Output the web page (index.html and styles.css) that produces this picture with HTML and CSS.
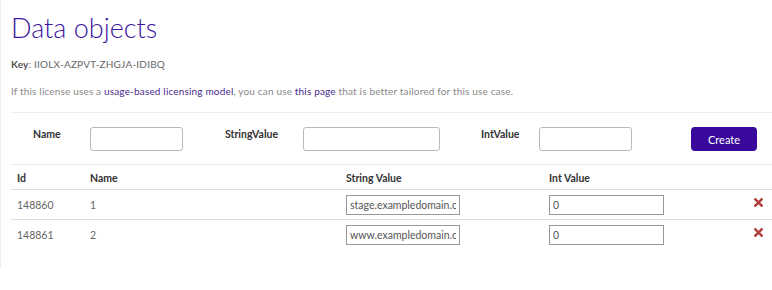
FILE: index.html
```html
<!DOCTYPE html>
<html lang="en">
<head>
    <meta charset="UTF-8">
    <title>Data objects</title>
    <link rel="stylesheet" href="styles.css">
</head>
<body>
    <div class="panel">
        <h1 class="title">Data objects</h1>
        <p class="key"><strong>Key</strong>: IIOLX-AZPVT-ZHGJA-IDIBQ</p>
        <p class="note">If this license uses a <a href="#">usage-based licensing model</a>, you can use <a href="#">this page</a> that is better tailored for this use case.</p>

        <form class="create-form">
            <label class="form-label lbl-name">Name</label>
            <input type="text" class="form-input in-name">
            <label class="form-label lbl-string">StringValue</label>
            <input type="text" class="form-input in-string">
            <label class="form-label lbl-int">IntValue</label>
            <input type="text" class="form-input in-int">
            <button type="button" class="create-btn">Create</button>
        </form>

        <table class="objects">
            <thead>
                <tr>
                    <th class="col-id">Id</th>
                    <th class="col-name">Name</th>
                    <th class="col-string">String Value</th>
                    <th class="col-int">Int Value</th>
                    <th class="col-del"></th>
                </tr>
            </thead>
            <tbody>
                <tr>
                    <td>148860</td>
                    <td>1</td>
                    <td><input type="text" class="cell-input str" value="stage.exampledomain.com"></td>
                    <td><input type="text" class="cell-input num" value="0"></td>
                    <td class="col-del"><svg class="del" width="9" height="9" viewBox="0 0 10 10"><path d="M1.5 1.5 L8.5 8.5 M8.5 1.5 L1.5 8.5" stroke="#b0403d" stroke-width="2.8" stroke-linecap="square"/></svg></td>
                </tr>
                <tr>
                    <td>148861</td>
                    <td>2</td>
                    <td><input type="text" class="cell-input str" value="www.exampledomain.com"></td>
                    <td><input type="text" class="cell-input num" value="0"></td>
                    <td class="col-del"><svg class="del" width="9" height="9" viewBox="0 0 10 10"><path d="M1.5 1.5 L8.5 8.5 M8.5 1.5 L1.5 8.5" stroke="#b0403d" stroke-width="2.8" stroke-linecap="square"/></svg></td>
                </tr>
            </tbody>
        </table>
    </div>
</body>
</html>
```

FILE: styles.css
```css
* {
    margin: 0;
    padding: 0;
    box-sizing: border-box;
}

body {
    font-family: Lato, 'Open Sans', sans-serif;
    background: #fff;
    color: #555;
    overflow: hidden;
}

.panel {
    border-left: 1px solid #ececec;
    height: 268px;
    padding-left: 10px;
    width: 790px;
}

.title {
    font-family: Lato, sans-serif;
    font-weight: 300;
    font-size: 27px;
    line-height: 34px;
    color: #3c16a0;
    padding-top: 11px;
}

.key {
    font-size: 10px;
    color: #666;
    margin-top: 13px;
    letter-spacing: 0.2px;
}

.key strong {
    color: #555;
}

.note {
    font-size: 10px;
    color: #888;
    margin-top: 15px;
    letter-spacing: 0.17px;
}

.note a {
    color: #4a2a8e;
    text-decoration: none;
}

.create-form {
    display: grid;
    grid-template-columns: 79px 93px 120px 137px 99px 93px 59px 66px;
    align-items: start;
    border-top: 1px solid #eee;
    margin-top: 15px;
    padding: 14px 0 13px;
}

.form-label {
    font-size: 10.5px;
    font-weight: bold;
    color: #333;
    padding-top: 1px;
}

.lbl-name { padding-left: 22px; }
.lbl-string { padding-left: 42px; }
.lbl-int { padding-left: 41px; }

.form-input {
    height: 24px;
    border: 1px solid #b8b8c0;
    border-radius: 3px;
    background: #fff;
}

.create-btn {
    grid-column: 8;
    height: 24px;
    background: #38099a;
    color: #fff;
    border: none;
    border-radius: 4px;
    font-family: Lato, sans-serif;
    font-size: 11px;
}

.objects {
    border-collapse: collapse;
    width: 762px;
    font-size: 10.5px;
}

.objects th {
    text-align: left;
    font-weight: bold;
    color: #333;
    height: 25px;
    padding-top: 2px;
    border-top: 1px solid #eee;
    border-bottom: 1px solid #ddd;
}

.objects td {
    height: 30px;
    color: #666;
    border-bottom: 1px solid #ddd;
}

.objects tbody tr:last-child td {
    border-bottom: none;
}

.objects th:first-child,
.objects td:first-child {
    padding-left: 6px;
}

.col-id { width: 79px; }
.col-name { width: 256px; }
.col-string { width: 203px; }
.col-int { width: 194px; }

.col-del {
    text-align: left;
    padding-left: 11px;
}

.cell-input {
    height: 20px;
    border: 1px solid #999;
    padding: 0 3px;
    font-family: Lato, sans-serif;
    font-size: 10.5px;
    color: #555;
    vertical-align: middle;
}

.cell-input.str { width: 114px; }
.cell-input.num { width: 115px; }

.del {
    display: block;
    margin-top: -4px;
}
```
